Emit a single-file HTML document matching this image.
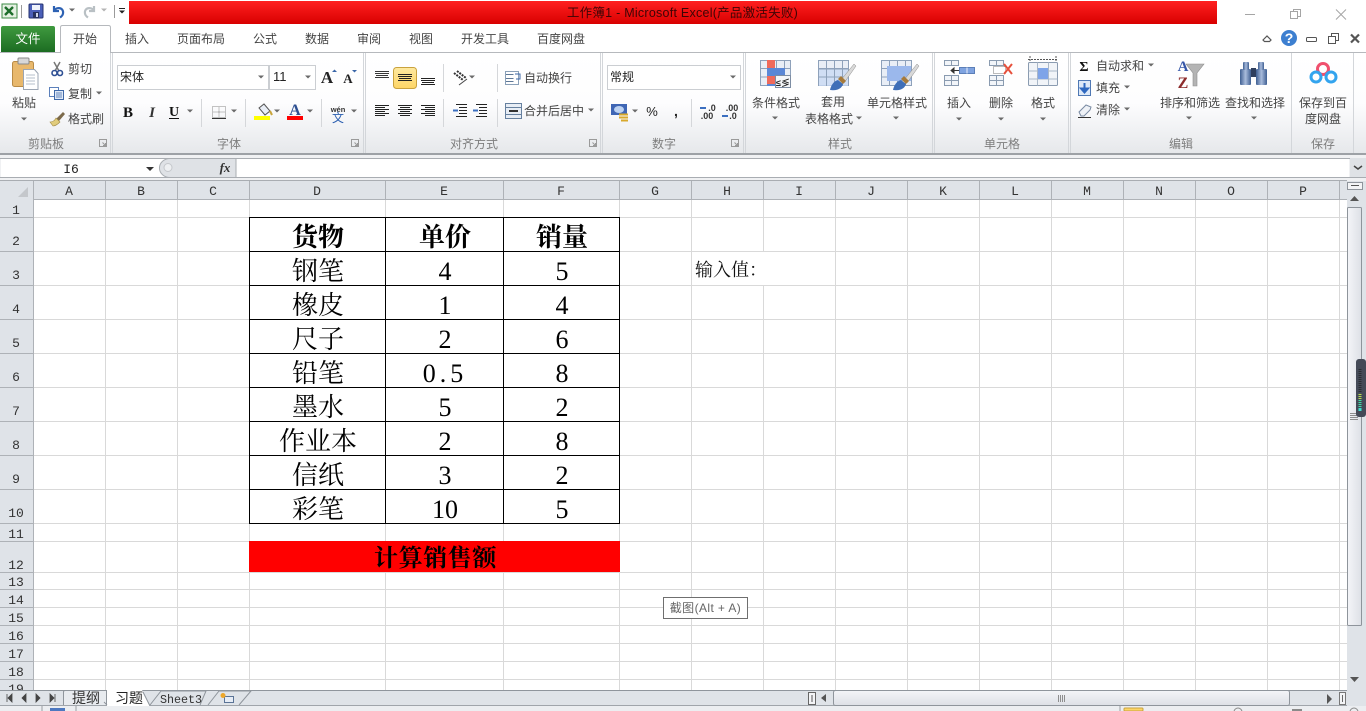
<!DOCTYPE html>
<html lang="zh-CN"><head><meta charset="utf-8"><title>工作簿1 - Microsoft Excel</title>
<style>
html,body{margin:0;padding:0;width:1366px;height:711px;overflow:hidden;background:#fff}
svg{display:block}
text{font-family:"Liberation Sans","Noto Sans CJK SC",sans-serif;font-size:12px;fill:#444}
.m{text-anchor:middle}
.lb{fill:#7d7d7d;text-anchor:middle}
.h{font-family:"Liberation Mono","Noto Sans CJK SC",monospace;font-size:13px;fill:#333;text-anchor:middle}
.c{font-family:"Liberation Serif","Noto Serif CJK SC",serif;font-size:26px;fill:#000;text-anchor:middle}
.b{font-weight:700}
</style></head><body>
<svg width="1366" height="711" viewBox="0 0 1366 711" xmlns="http://www.w3.org/2000/svg">
<defs>
<linearGradient id="red" x1="0" y1="0" x2="0" y2="1"><stop offset="0" stop-color="#ff2020"/><stop offset="1" stop-color="#d80000"/></linearGradient>
<linearGradient id="grn" x1="0" y1="0" x2="0" y2="1"><stop offset="0" stop-color="#3f9a3f"/><stop offset="1" stop-color="#1c6c22"/></linearGradient>
<linearGradient id="rib" x1="0" y1="0" x2="0" y2="1"><stop offset="0" stop-color="#fff"/><stop offset=".5" stop-color="#fdfdfe"/><stop offset="1" stop-color="#e6e8eb"/></linearGradient>
<linearGradient id="yel" x1="0" y1="0" x2="0" y2="1"><stop offset="0" stop-color="#fee9a0"/><stop offset="1" stop-color="#fdd566"/></linearGradient>
<linearGradient id="thm" x1="0" y1="0" x2="1" y2="0"><stop offset="0" stop-color="#f4f5f8"/><stop offset="1" stop-color="#dde0e6"/></linearGradient>
<linearGradient id="thh" x1="0" y1="0" x2="0" y2="1"><stop offset="0" stop-color="#f4f5f8"/><stop offset="1" stop-color="#dde0e6"/></linearGradient>
<linearGradient id="bin" x1="0" y1="0" x2="1" y2="0"><stop offset="0" stop-color="#3f5f92"/><stop offset=".5" stop-color="#a9bcdc"/><stop offset="1" stop-color="#3f5f92"/></linearGradient>
<path id="a" d="M-3-1.5h6l-3 3z" fill="#6a6a6a"/>
<path id="dl" d="M-3.500-3.500h7v7h-7zM-.5-.5l3 3M2.500 0v2.500H0" fill="none" stroke="#9a9a9a" stroke-width="1"/>
<path id="sep" d="M0 0v28" stroke="#d5d7da" stroke-width="1"/>
<g id="tbl"><rect x=".5" y=".5" width="30" height="25" fill="#e9eef6" stroke="#8ea1ba"/><path d="M.5 8.500h30M.5 17h30M8.500.5v25M16.500.5v25M24.500.5v25" stroke="#8ea1ba" fill="none"/></g>
<g id="brush"><path d="M3 12L16-4l2 2L6 15z" fill="#d9d9d9" stroke="#8b8b8b" stroke-width=".5"/><path d="M-8 22c1-5 4-9 8-10l5 4c-1 4-5 7-13 6z" fill="#3f6fb8"/><path d="M0 11l5 5 3-3-5-5z" fill="#a67a3a"/></g>
</defs>

<!-- title bar -->
<rect width="1366" height="25" fill="#fff"/>
<rect x="2" y="4" width="15" height="14" fill="#e5f1e3" stroke="#3d8b45"/>
<path d="M5 7l8 8M13 7l-8 8" stroke="#1e6e2c" stroke-width="2.400"/>
<path d="M21.500 5v13M114.500 5v13" stroke="#9a9a9a"/>
<rect x="29" y="4" width="14" height="14" rx="1" fill="#4a5fb8" stroke="#27336f"/><rect x="32" y="5" width="8" height="5" fill="#eef2fb"/><rect x="33" y="12" width="6" height="6" fill="#25315f"/><rect x="36" y="13" width="2" height="4" fill="#cfd6ea"/>
<path d="M54 6v5h5M54 10.500c3-4 10-3 9 3-.3 2-1.500 3-3 4" fill="none" stroke="#2e62b3" stroke-width="2.200"/>
<use href="#a" x="72" y="10"/>
<path d="M94 6v5h-5M94 10.500c-3-4-10-3-9 3 .3 2 1.500 3 3 4" fill="none" stroke="#b9c0c4" stroke-width="2.200"/>
<use href="#a" x="104" y="10" opacity=".5"/>
<path d="M119 8h6v1h-6zM119 10.500h6l-3 3z" fill="#222"/>
<rect x="129" y="1" width="1088" height="23" fill="url(#red)"/>
<text x="682.500" y="17" class="m" style="fill:#3d0505;font-size:12.500px;letter-spacing:.25px">工作簿1 - Microsoft Excel(产品激活失败)</text>
<path d="M1245 14.500h10" stroke="#a5a5a5"/>
<path d="M1290.500 11.500h7v7h-7zM1293.500 11V9.500h7v7h-3" fill="none" stroke="#a5a5a5"/>
<path d="M1336 9.500l10 10M1346 9.500l-10 10" stroke="#a5a5a5"/>

<!-- tabs -->
<rect y="25" width="1366" height="28" fill="#fff"/>
<path d="M0 52.500h1366" stroke="#b6b9bd"/>
<path d="M1 52V28q0-2 2-2h50q2 0 2 2v24z" fill="url(#grn)"/>
<text x="28" y="43" class="m" style="fill:#fff;font-size:12.500px">文件</text>
<path d="M60.500 53V27.500q0-2 2-2h46q2 0 2 2V53" fill="#fff" stroke="#b6b9bd"/><rect x="61" y="51" width="49" height="3" fill="#fff"/>
<text x="85" y="43" class="m">开始</text>
<text x="137" y="43" class="m">插入</text>
<text x="201" y="43" class="m">页面布局</text>
<text x="265" y="43" class="m">公式</text>
<text x="317" y="43" class="m">数据</text>
<text x="369" y="43" class="m">审阅</text>
<text x="421" y="43" class="m">视图</text>
<text x="485" y="43" class="m">开发工具</text>
<text x="561" y="43" class="m">百度网盘</text>
<path d="M1263 40l4-4 4 4-1.500 1.500h-5z" fill="none" stroke="#555" stroke-width="1.200"/>
<circle cx="1289" cy="38" r="8" fill="#3d7fd0"/><text x="1289" y="43" class="m b" style="fill:#fff;font-size:14px">?</text>
<rect x="1306.500" y="37.500" width="10" height="4" rx="1" fill="#fff" stroke="#555"/>
<path d="M1328.500 36.500h7v7h-7zM1331.500 36v-2.500h7v7h-3" fill="#fff" stroke="#555"/>
<path d="M1351 34.500l8 8M1359 34.500l-8 8" stroke="#555" stroke-width="2.200"/>

<!-- ribbon -->
<rect y="53" width="1366" height="100" fill="url(#rib)"/>
<rect y="153" width="1366" height="2" fill="#9da1a6"/>
<g stroke="#d3d6da" fill="none"><path d="M110.500 53v100M112.500 53v100M363.500 53v100M365.500 53v100M600.500 53v100M602.500 53v100M743.500 53v100M745.500 53v100M932.500 53v100M934.500 53v100M1068.500 53v100M1070.500 53v100M1291.500 53v100M1353.500 53v100"/></g>
<!-- clipboard -->
<rect x="12.500" y="61.500" width="21" height="25" rx="2" fill="#e8b86c" stroke="#b98b45"/>
<rect x="18" y="58" width="11" height="6" rx="1" fill="#d7d7d7" stroke="#8a8a8a"/>
<path d="M23.500 69.500h11l3.500 4v16h-14.500z" fill="#fff" stroke="#9ba5b3"/>
<path d="M26 75h9M26 78h9M26 81h9M26 84h9" stroke="#b6bfcb"/>
<text x="24" y="107" class="m">粘贴</text><use href="#a" x="24" y="119"/>
<path d="M54 62l5 9M60 62l-5 9" stroke="#777" stroke-width="1.500"/><circle cx="54.500" cy="73" r="2.500" fill="none" stroke="#2e4f93" stroke-width="1.600"/><circle cx="60" cy="73" r="2.500" fill="none" stroke="#2e4f93" stroke-width="1.600"/>
<text x="68" y="73">剪切</text>
<rect x="49.500" y="87.500" width="9" height="9" fill="#fff" stroke="#5b80bb"/><rect x="54.500" y="90.500" width="9" height="9" fill="#dfe9f7" stroke="#3e68a8"/><path d="M56 93h6M56 95h6M56 97h6" stroke="#3e68a8" stroke-width=".8"/>
<text x="68" y="98">复制</text><use href="#a" x="99" y="93"/>
<path d="M56 119l7-7 2 2-6 7z" fill="#7c6a4b"/><path d="M50 122c3 0 5-2 6-4l4 4c-2 2-5 4-7 4z" fill="#e1cc7c" stroke="#a18b45" stroke-width=".6"/>
<text x="68" y="123">格式刷</text>
<text x="46" y="148" class="lb">剪贴板</text><use href="#dl" x="103" y="143"/>
<!-- font -->
<rect x="117.500" y="65.500" width="151" height="24" fill="#fff" stroke="#cbced2"/><rect x="269.500" y="65.500" width="46" height="24" fill="#fff" stroke="#cbced2"/>
<text x="120" y="81" style="fill:#222">宋体</text><use href="#a" x="261" y="77"/>
<text x="273" y="81" style="fill:#222;font-size:13px">11</text><use href="#a" x="308" y="77"/>
<text x="327" y="83" class="m b" style="font-family:'Liberation Serif',serif;font-size:17px;fill:#222">A</text><path d="M332 72l2.500-2.500L337 72z" fill="#3a66a8"/>
<text x="348" y="83" class="m b" style="font-family:'Liberation Serif',serif;font-size:13px;fill:#222">A</text><path d="M352 70l2.500 2.500L357 70z" fill="#3a66a8"/>
<text x="128" y="117" class="m b" style="font-family:'Liberation Serif',serif;font-size:15px;fill:#111">B</text>
<text x="152" y="117" class="m" style="font-family:'Liberation Serif',serif;font-style:italic;font-weight:700;font-size:15px;fill:#333">I</text>
<text x="174" y="116" class="m b" style="font-family:'Liberation Serif',serif;font-size:14px;fill:#111">U</text><path d="M169 118.500h10" stroke="#111"/><use href="#a" x="190" y="111"/>
<use href="#sep" x="201.500" y="99"/><use href="#sep" x="245.500" y="99"/><use href="#sep" x="321.500" y="99"/>
<path d="M212.500 106.500h13v11h-13zM212.500 112h13M219 106.500v11" fill="none" stroke="#888" stroke-dasharray="1 1"/><path d="M212 118.500h14" stroke="#333"/><use href="#a" x="234" y="111"/>
<path d="M259 108l5-4 6 7-5 4z" fill="#e9eef6" stroke="#555"/><path d="M270 111l2 4" stroke="#c9a53c" stroke-width="2"/><rect x="254" y="116" width="16" height="4" fill="#ff0"/><use href="#a" x="277" y="111"/>
<text x="295" y="115" class="m b" style="font-family:'Liberation Serif',serif;font-size:16px;fill:#2d4f91">A</text><rect x="287" y="116" width="16" height="4" fill="#f00"/><use href="#a" x="310" y="111"/>
<text x="338" y="112" class="m b" style="font-size:7.500px;fill:#333">wén</text><text x="338" y="122" class="m" style="font-size:12px;fill:#2b5fb0;font-family:'Noto Sans CJK SC',sans-serif">文</text><use href="#a" x="354" y="111"/>
<text x="229" y="148" class="lb">字体</text><use href="#dl" x="355" y="143"/>
<!-- align -->
<g stroke="#222"><path d="M375 71.500h14M375 73.500h14M376 75.500h12M375 77.500h14" opacity=".9"/></g>
<rect x="393.500" y="67.500" width="23" height="21" rx="3" fill="url(#yel)" stroke="#c9a23e"/>
<path d="M398 74.500h14M398 76.500h14M399 78.500h12M398 80.500h14M421 78.500h14M421 80.500h14M422 82.500h12M421 84.500h14" stroke="#222"/>
<path d="M375 105.500h14M375 107.500h10M375 109.500h14M375 111.500h10M375 113.500h14M375 115.500h10M398 105.500h14M400 107.500h10M398 109.500h14M400 111.500h10M398 113.500h14M400 115.500h10M421 105.500h14M425 107.500h10M421 109.500h14M425 111.500h10M421 113.500h14M425 115.500h10" stroke="#222"/>
<use href="#sep" x="443.500" y="64"/><use href="#sep" x="443.500" y="99"/><use href="#sep" x="497.500" y="64"/><use href="#sep" x="497.500" y="99"/>
<path d="M454 73l9 7M457 71l9 7" fill="none" stroke="#333" stroke-width="2" stroke-dasharray="2 1"/><path d="M459 85l8-6" stroke="#444"/><use href="#a" x="472" y="77"/>
<path d="M456 104.500h11M459 107.500h8M459 110.500h8M459 113.500h8M456 116.500h11M476 104.500h11M479 107.500h8M479 110.500h8M479 113.500h8M476 116.500h11" stroke="#222"/>
<path d="M458 110.500l-5 0M478 110.500l-5 0" stroke="#3b6fc0" stroke-width="2"/>
<path d="M505.500 74.500h8M505.500 78.500h8M505.500 81.500h8" stroke="#5e7897" fill="none"/><rect x="505.500" y="71.500" width="13" height="13" fill="none" stroke="#8aa0b8"/><path d="M515 74h5v5h-4" fill="none" stroke="#3e68a8"/>
<text x="524" y="82">自动换行</text>
<rect x="505.500" y="103.500" width="16" height="15" fill="#e7edf5" stroke="#66809f"/><path d="M509 111h9" stroke="#333" stroke-width="2"/><path d="M505.500 107.500h16M505.500 114.500h16" stroke="#66809f"/>
<text x="524" y="115">合并后居中</text><use href="#a" x="591" y="110"/>
<text x="474" y="148" class="lb">对齐方式</text><use href="#dl" x="593" y="143"/>
<!-- number -->
<rect x="607.500" y="65.500" width="133" height="24" fill="#fff" stroke="#cbced2"/>
<text x="610" y="81" style="fill:#222">常规</text><use href="#a" x="733" y="77"/>
<rect x="611" y="104" width="16" height="11" fill="#3f66b5"/><ellipse cx="619" cy="109.500" rx="5" ry="3.500" fill="#bcd2f2"/><path d="M619 114.500h9M619 117.500h9M621 120.500h7" stroke="#d8a92c" stroke-width="2"/>
<use href="#a" x="635" y="111"/>
<text x="652" y="116" class="m" style="fill:#222;font-size:13px">%</text><text x="676" y="116" class="m b" style="fill:#222;font-size:14px">,</text>
<use href="#sep" x="691.500" y="99"/>
<text x="712" y="111" class="m b" style="font-size:9px;fill:#333">.0</text><text x="707" y="119" class="m b" style="font-size:9px;fill:#333">.00</text><path d="M700 108h6" stroke="#3b6fc0" stroke-width="2"/>
<text x="732" y="111" class="m b" style="font-size:9px;fill:#333">.00</text><text x="733" y="119" class="m b" style="font-size:9px;fill:#333">.0</text><path d="M722 116h6" stroke="#3b6fc0" stroke-width="2"/>
<text x="664" y="148" class="lb">数字</text><use href="#dl" x="735" y="143"/>
<!-- styles -->
<use href="#tbl" x="760" y="60"/>
<rect x="767" y="60" width="8" height="8" fill="#ef6a5b"/><rect x="767" y="68" width="18" height="8" fill="#5a87d6"/><rect x="767" y="76" width="14" height="8" fill="#ef6a5b"/><rect x="767" y="84" width="8" height="2" fill="#5a87d6"/>
<rect x="775.500" y="75.500" width="15" height="12" fill="#f4f6f9" stroke="#7d8da3"/><text x="783" y="86" class="m b" style="font-size:9px;fill:#222">≤≶</text>
<text x="776" y="107" class="m">条件格式</text><use href="#a" x="775" y="118"/>
<use href="#tbl" x="818" y="60"/><rect x="819" y="69" width="29" height="17" fill="#c9d9f4" opacity=".8"/><path d="M818.500 69h30M818.500 77h30M826.500 60v26M834.500 60v26M842.500 60v26" stroke="#8ea1ba"/><use href="#brush" x="838" y="68"/>
<text x="833" y="106" class="m">套用</text><text x="829" y="123" class="m">表格格式</text><use href="#a" x="859" y="118"/>
<use href="#tbl" x="881" y="60"/><rect x="887" y="66" width="24" height="15" fill="#9bb8ec"/><use href="#brush" x="901" y="68"/>
<text x="897" y="107" class="m">单元格样式</text><use href="#a" x="896" y="118"/>
<text x="840" y="148" class="lb">样式</text>
<!-- cells -->
<g fill="#f2f5f9" stroke="#8a9bb0"><path d="M944.500 60.500h14v5h-14zM951.500 60.500v5M944.500 75.500h14v10h-14zM944.500 80.500h14M951.500 75.500v10"/></g>
<rect x="959.500" y="67.500" width="15" height="6" fill="#7fa3e0" stroke="#5c7fb8"/><path d="M967 67.500v6" stroke="#e8eef8"/><path d="M951 70.500h8M951 70.500l3-2.500v5z" stroke="#333" fill="#333"/>
<text x="959" y="107" class="m">插入</text><use href="#a" x="959" y="119"/>
<g fill="#f2f5f9" stroke="#8a9bb0"><path d="M989.500 60.500h14v5h-14zM996.500 60.500v5M989.500 75.500h14v10h-14zM989.500 80.500h14M996.500 75.500v10"/></g>
<rect x="993.500" y="66.500" width="12" height="7" fill="none" stroke="#777" stroke-dasharray="1 1"/><path d="M1004 64l8 10M1012 64l-8 10" stroke="#e6503c" stroke-width="2"/>
<text x="1001" y="107" class="m">删除</text><use href="#a" x="1001" y="119"/>
<path d="M1028 59.500h30M1030 56v6M1056 56v6" stroke="#555" stroke-dasharray="2 1"/>
<rect x="1028.500" y="62.500" width="29" height="23" rx="1" fill="#f1f4f8" stroke="#8a9bb0"/><path d="M1028.500 71h29M1028.500 79h29M1037.500 62.500v23M1048.500 62.500v23" stroke="#a9b7c8"/><rect x="1038" y="68" width="10" height="11" fill="#7ea4e8"/>
<text x="1043" y="107" class="m">格式</text><use href="#a" x="1043" y="119"/>
<text x="1002" y="148" class="lb">单元格</text>
<!-- editing -->
<text x="1084" y="71" class="m b" style="font-size:14px;fill:#111;font-family:'Liberation Serif',serif">Σ</text>
<text x="1096" y="70">自动求和</text><use href="#a" x="1151" y="65"/>
<rect x="1078.500" y="80.500" width="12" height="15" fill="#dce8f8" stroke="#4f78b4"/><path d="M1084.500 83v8M1081 88.500l3.500 4 3.500-4z" stroke="#2e68c0" stroke-width="2" fill="#2e68c0"/>
<text x="1096" y="92">填充</text><use href="#a" x="1127" y="87"/>
<path d="M1079 112l7-7 5 2-1 3-6 6h-3z" fill="#eef1f6" stroke="#7a8ba3"/><path d="M1078 117.500h13" stroke="#333"/>
<text x="1096" y="114">清除</text><use href="#a" x="1127" y="109"/>
<text x="1183" y="71" class="m b" style="font-family:'Liberation Serif',serif;font-size:15px;fill:#3656a8">A</text>
<text x="1183" y="88" class="m b" style="font-family:'Liberation Serif',serif;font-size:16px;fill:#8d2c2c">Z</text>
<path d="M1186 64h18l-7 9v13h-4V73z" fill="#b4b4b4" stroke="#8e8e8e" stroke-width=".6"/>
<rect x="1240" y="69" width="11" height="16" rx="1" fill="url(#bin)"/><rect x="1256" y="69" width="11" height="16" rx="1" fill="url(#bin)"/><rect x="1243" y="62" width="6" height="8" rx="1" fill="url(#bin)"/><rect x="1258" y="62" width="6" height="8" rx="1" fill="url(#bin)"/><rect x="1251" y="68" width="5" height="9" fill="#2f3f5e"/>
<text x="1190" y="107" class="m">排序和筛选</text><use href="#a" x="1189" y="118"/>
<text x="1255" y="107" class="m">查找和选择</text><use href="#a" x="1254" y="118"/>
<text x="1181" y="148" class="lb">编辑</text>
<!-- save -->
<circle cx="1323" cy="69" r="5.500" fill="none" stroke="#f0506e" stroke-width="3"/><circle cx="1316" cy="77" r="5" fill="none" stroke="#33a4ee" stroke-width="3"/><circle cx="1331" cy="77" r="5" fill="none" stroke="#33a4ee" stroke-width="3"/>
<text x="1323" y="107" class="m">保存到百</text><text x="1323" y="123" class="m">度网盘</text>
<text x="1323" y="148" class="lb">保存</text>

<!-- formula bar -->
<rect y="155" width="1366" height="26" fill="#f0f1f3"/>
<rect x="1" y="158" width="1348" height="19" fill="#fff"/>
<path d="M0 158.500h1366M0 177.500h1366" stroke="#a9adb2"/>
<text x="71" y="173" class="h" style="fill:#222">I6</text><path d="M146 167h8l-4 4z" fill="#333"/>
<path d="M236 158.500H170a10 9 0 0 0 0 19h66z" fill="#dfe2e6" stroke="#a9adb2"/><circle cx="168" cy="167.500" r="4" fill="#eef0f2" stroke="#c5c8cc"/>
<text x="225" y="172" class="m b" style="font-family:'Liberation Serif',serif;font-style:italic;font-size:13px;fill:#333">fx</text>
<rect x="1350" y="158" width="16" height="19" fill="#dfe2e6"/><path d="M1354 166l4 3 4-3" fill="none" stroke="#444" stroke-width="1.500"/>

<!-- headers -->
<rect y="181" width="1347" height="18" fill="#dfe3e8"/><rect y="199" width="33" height="491" fill="#dfe3e8"/>
<path d="M0 180.500h1347" stroke="#a9adb2"/>
<path d="M28 187v10H18z" fill="#c4c7cb"/>
<!-- grid -->
<g stroke="#d9d9d9" fill="none"><path d="M105.500 199v491M177.500 199v491M249.500 199v491M385.500 199v491M503.500 199v491M619.500 199v491M691.500 199v491M763.500 199v491M835.500 199v491M907.500 199v491M979.500 199v491M1051.500 199v491M1123.500 199v491M1195.500 199v491M1267.500 199v491M1339.500 199v491"/>
<path d="M33 217.500h1314M33 251.500h1314M33 285.500h1314M33 319.500h1314M33 353.500h1314M33 387.500h1314M33 421.500h1314M33 455.500h1314M33 489.500h1314M33 523.500h1314M33 541.500h1314M33 572.500h1314M33 589.500h1314M33 607.500h1314M33 625.500h1314M33 643.500h1314M33 661.500h1314M33 679.500h1314"/></g>
<g stroke="#aeb2b7" fill="none"><path d="M33.500 181v509M105.500 181v18M177.500 181v18M249.500 181v18M385.500 181v18M503.500 181v18M619.500 181v18M691.500 181v18M763.500 181v18M835.500 181v18M907.500 181v18M979.500 181v18M1051.500 181v18M1123.500 181v18M1195.500 181v18M1267.500 181v18M1339.500 181v18M33 199.500h1314"/>
<path d="M0 217.500h33M0 251.500h33M0 285.500h33M0 319.500h33M0 353.500h33M0 387.500h33M0 421.500h33M0 455.500h33M0 489.500h33M0 523.500h33M0 541.500h33M0 572.500h33M0 589.500h33M0 607.500h33M0 625.500h33M0 643.500h33M0 661.500h33M0 679.500h33"/></g>
<text x="69" y="195" class="h">A</text><text x="141" y="195" class="h">B</text><text x="213" y="195" class="h">C</text><text x="317" y="195" class="h">D</text><text x="444" y="195" class="h">E</text><text x="561" y="195" class="h">F</text><text x="655" y="195" class="h">G</text><text x="727" y="195" class="h">H</text><text x="799" y="195" class="h">I</text><text x="871" y="195" class="h">J</text><text x="943" y="195" class="h">K</text><text x="1015" y="195" class="h">L</text><text x="1087" y="195" class="h">M</text><text x="1159" y="195" class="h">N</text><text x="1231" y="195" class="h">O</text><text x="1303" y="195" class="h">P</text>
<text x="16" y="214" class="h">1</text><text x="16" y="245" class="h">2</text><text x="16" y="279" class="h">3</text><text x="16" y="313" class="h">4</text><text x="16" y="347" class="h">5</text><text x="16" y="381" class="h">6</text><text x="16" y="415" class="h">7</text><text x="16" y="449" class="h">8</text><text x="16" y="483" class="h">9</text><text x="16" y="517" class="h">10</text><text x="16" y="538" class="h">11</text><text x="16" y="569" class="h">12</text><text x="16" y="586" class="h">13</text><text x="16" y="604" class="h">14</text><text x="16" y="622" class="h">15</text><text x="16" y="640" class="h">16</text><text x="16" y="658" class="h">17</text><text x="16" y="676" class="h">18</text><text x="16" y="693" class="h">19</text>

<!-- table -->
<rect x="250" y="218" width="369" height="305" fill="#fff"/>
<path d="M249.500 217v307M385.500 217v307M503.500 217v307M619.500 217v307M249 217.500h371M249 251.500h371M249 285.500h371M249 319.500h371M249 353.500h371M249 387.500h371M249 421.500h371M249 455.500h371M249 489.500h371M249 523.500h371" stroke="#000" fill="none"/>
<text x="318" y="246" class="c b">货物</text><text x="445" y="246" class="c b">单价</text><text x="562" y="246" class="c b">销量</text>
<text x="318" y="280" class="c">钢笔</text><text x="445" y="280" class="c">4</text><text x="562" y="280" class="c">5</text>
<text x="318" y="314" class="c">橡皮</text><text x="445" y="314" class="c">1</text><text x="562" y="314" class="c">4</text>
<text x="318" y="348" class="c">尺子</text><text x="445" y="348" class="c">2</text><text x="562" y="348" class="c">6</text>
<text x="318" y="382" class="c">铅笔</text><text x="445" y="382" class="c" style="letter-spacing:4px">0.5</text><text x="562" y="382" class="c">8</text>
<text x="318" y="416" class="c">墨水</text><text x="445" y="416" class="c">5</text><text x="562" y="416" class="c">2</text>
<text x="318" y="450" class="c">作业本</text><text x="445" y="450" class="c">2</text><text x="562" y="450" class="c">8</text>
<text x="318" y="484" class="c">信纸</text><text x="445" y="484" class="c">3</text><text x="562" y="484" class="c">2</text>
<text x="318" y="518" class="c">彩笔</text><text x="445" y="518" class="c">10</text><text x="562" y="518" class="c">5</text>
<rect x="249" y="541" width="371" height="31" fill="#f00"/>
<text x="435.500" y="566" class="c b" style="font-size:24px;letter-spacing:.6px">计算销售额</text>
<rect x="692" y="252" width="72" height="33" fill="#fff"/>
<text x="695" y="276" style="font-family:'Noto Serif CJK SC',serif;font-size:18px;fill:#111">输入值：</text>
<rect x="663.500" y="597.500" width="84" height="21" fill="#fff" stroke="#6f6f6f"/>
<text x="705.500" y="612" class="m" style="fill:#666;letter-spacing:.4px">截图(Alt + A)</text>

<!-- vertical scrollbar -->
<rect x="1347" y="181" width="19" height="530" fill="#dfe3e8"/>
<rect x="1347.500" y="182.500" width="15" height="7" fill="#f3f4f6" stroke="#8e949b"/><path d="M1351 185.500h8" stroke="#555"/>
<path d="M1350 201l4.500-5 4.500 5z" fill="#555"/>
<rect x="1347.500" y="207.500" width="14" height="418" rx="1" fill="url(#thm)" stroke="#8e949b"/>
<path d="M1350 413.500h8M1350 415.500h8M1350 417.500h8M1350 419.500h8" stroke="#8e8e8e"/>
<path d="M1350 677h9l-4.500 5z" fill="#555"/>
<rect x="1356" y="359" width="10" height="58" rx="3" fill="#444a57"/>
<path d="M1360 369v23" stroke="#2a2d33" stroke-width="3" stroke-dasharray="1 1"/>
<path d="M1360 394v6" stroke="#b7e04f" stroke-width="3" stroke-dasharray="1 1"/><path d="M1360 400v8" stroke="#3fe0a8" stroke-width="3" stroke-dasharray="1 1"/><path d="M1360 408v3" stroke="#3fe0d0" stroke-width="3"/>

<!-- sheet tabs bar -->
<rect y="690" width="1347" height="16" fill="#dfe3e8"/>
<path d="M0 690.500h1347" stroke="#8f959c"/><path d="M0 705.500h1347" stroke="#a0a5ab"/>
<path d="M7 694v8M12 694v8l-4-4zM26 694v8l-4-4zM36 694v8l4-4zM50 694v8l4-4zM55 694v8" fill="#444" stroke="#444" stroke-width=".8"/>
<path d="M63.500 705v-13q0-1.500 1.500-1.500h41.500v14.500" fill="#e8ebef" stroke="#8f959c"/>
<path d="M107 690h35l8 16h-43z" fill="#fff"/><path d="M107 705l-3-3M150 706l-7-14" stroke="#8f959c" fill="none"/>
<text x="86" y="703" class="m" style="font-size:14px;fill:#333">提纲</text>
<text x="129" y="703" class="m" style="font-size:14px;fill:#222">习题</text>
<path d="M150 705l11-14h45l-6 14" fill="#dfe3e8" stroke="#8f959c"/>
<text x="181" y="703" class="m" style="font-family:'Liberation Mono',monospace;font-size:11.700px;fill:#333">Sheet3</text>
<path d="M208 705l11-14h32l-12 14" fill="#dfe3e8" stroke="#8f959c"/>
<rect x="224.500" y="696.500" width="9" height="6" fill="#e6ecf5" stroke="#5a7396"/><circle cx="223" cy="695.500" r="2.500" fill="#eda72b"/>
<rect x="808.500" y="692.500" width="7" height="12" fill="#f3f4f6" stroke="#666"/><path d="M812 695v7" stroke="#555"/>
<path d="M826 694v8l-5-4z" fill="#555"/>
<rect x="833.500" y="690.500" width="456" height="15" rx="2" fill="url(#thh)" stroke="#8f959c"/>
<path d="M1058.500 695v7M1060.500 695v7M1062.500 695v7M1064.500 695v7" stroke="#8e8e8e"/>
<path d="M1327 694v10l5-5z" fill="#555"/>
<rect x="1339.500" y="692.500" width="6" height="12" fill="#f3f4f6" stroke="#777"/><path d="M1342.500 695v7" stroke="#666"/>
<!-- status -->
<rect y="706" width="1366" height="5" fill="#eceef1"/>
<path d="M42 706v5M76 706v5M1120 706v5" stroke="#9a9ea4"/>
<rect x="50" y="708" width="15" height="3" fill="#4d78c0"/>
<rect x="1124" y="708" width="19" height="3" rx="1" fill="#fdd566" stroke="#c9a23e"/>
<circle cx="1238" cy="712" r="4" fill="none" stroke="#8a8a8a"/><rect x="1292" y="709" width="10" height="2" fill="#8a8a8a"/><circle cx="1354" cy="712" r="4" fill="none" stroke="#8a8a8a"/>
</svg>
</body></html>
